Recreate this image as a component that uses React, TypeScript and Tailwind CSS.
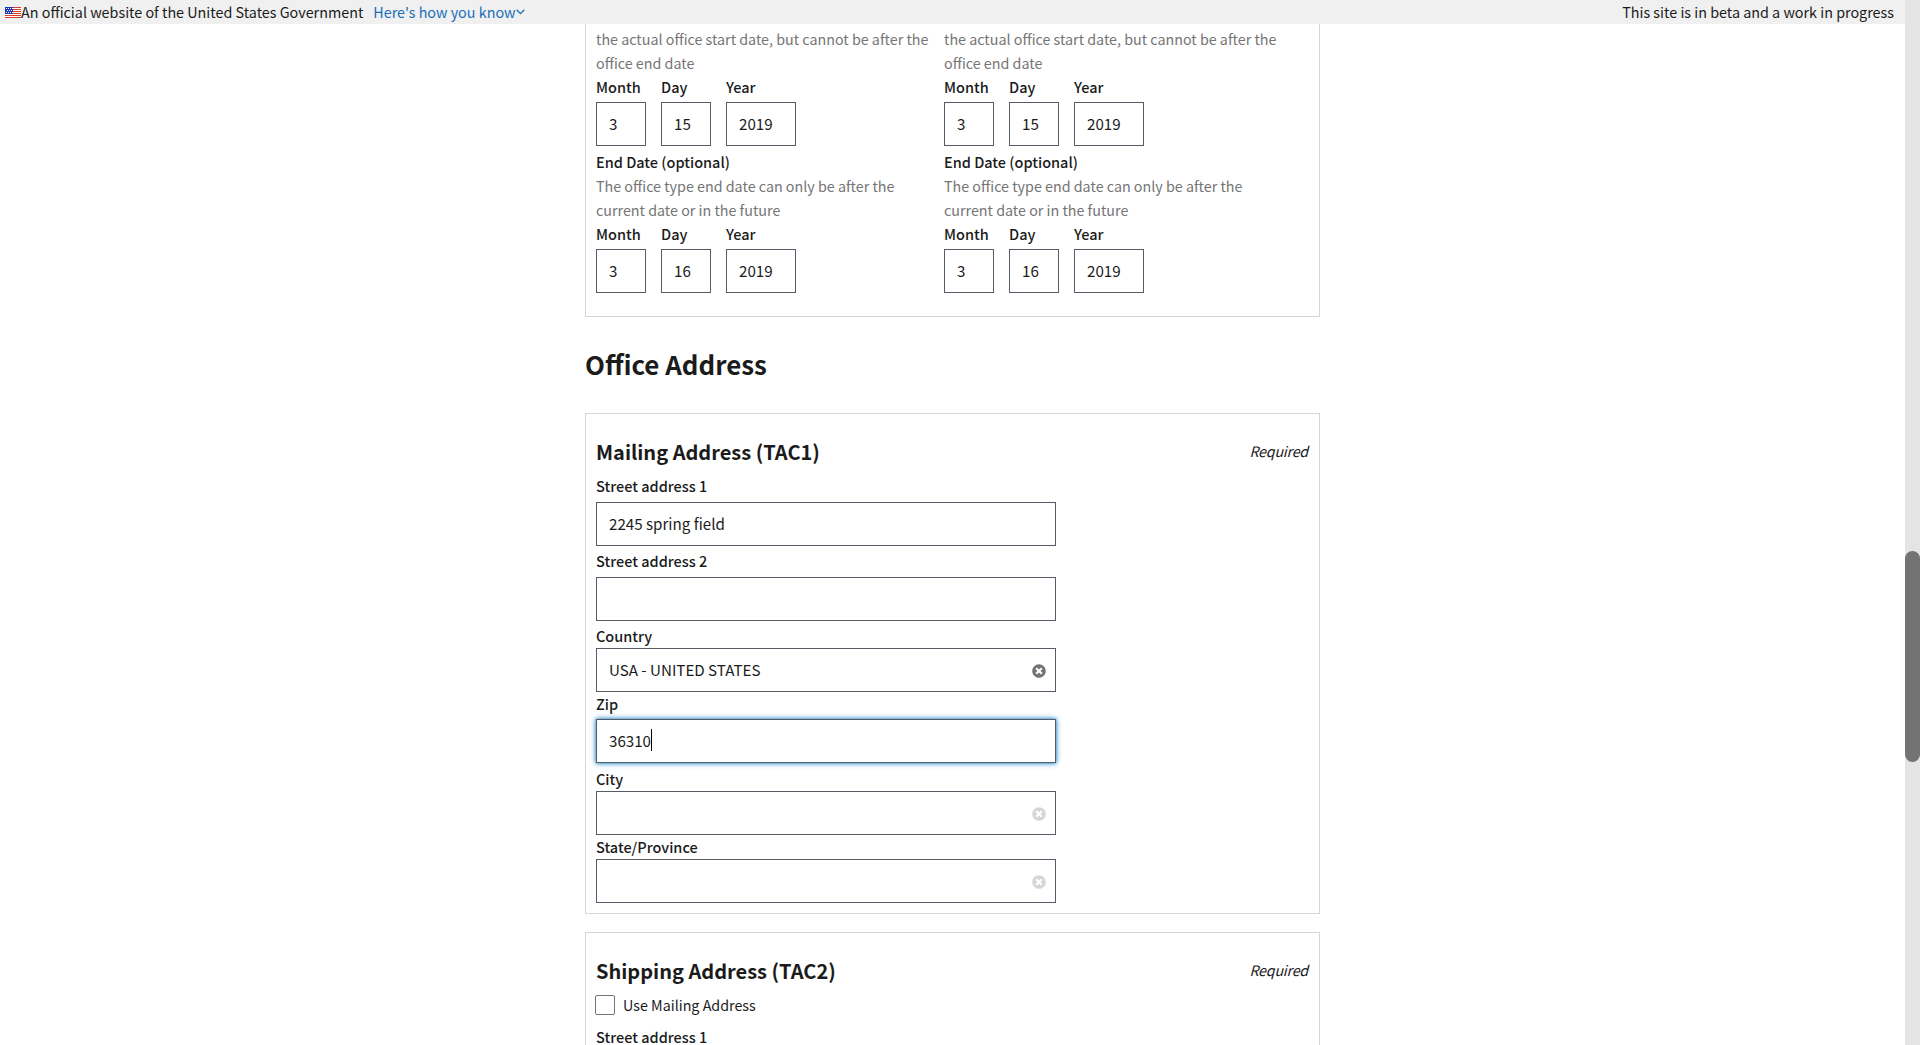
import React from 'react';
import { FaTimesCircle } from 'react-icons/fa';

function ClearIcon({ muted }: { muted?: boolean }) {
  return (
    <FaTimesCircle
      className={`absolute top-[15px] right-[9px] size-[14px] ${muted ? 'text-[#d6d6d6]' : 'text-[#757575]'}`}
    />
  );
}

function Label({ children, className }: { children: React.ReactNode; className: string }) {
  return <div className={`text-[14.5px] leading-[22px] font-medium ${className}`}>{children}</div>;
}

function Box({ value, size, children }: { value?: string; size: string; children?: React.ReactNode }) {
  return (
    <div
      className={`relative flex h-11 items-center border border-[#565c65] bg-white pb-[2px] pl-3 text-[15.15px] leading-6 ${size}`}
    >
      <span>{value}</span>
      {children}
    </div>
  );
}

function DateRow({ day }: { day: string }) {
  const parts = [
    { label: 'Month', value: '3', size: 'w-[50px]' },
    { label: 'Day', value: day, size: 'w-[50px]' },
    { label: 'Year', value: '2019', size: 'w-[70px]' },
  ];
  return (
    <div className="flex gap-[15px]">
      {parts.map((p) => (
        <div key={p.label}>
          <Label className="h-[26px]">{p.label}</Label>
          <Box value={p.value} size={p.size} />
        </div>
      ))}
    </div>
  );
}

function OfficeDates() {
  return (
    <div className="w-[348px]">
      <p className="-mt-px mb-px whitespace-nowrap text-[#757575]">
        the actual office start date, but cannot be after the
        <br />
        office end date
      </p>
      <DateRow day="15" />
      <Label className="mt-[5px] h-6">End Date (optional)</Label>
      <p className="-mt-px mb-px whitespace-nowrap text-[#757575]">
        The office type end date can only be after the
        <br />
        current date or in the future
      </p>
      <DateRow day="16" />
    </div>
  );
}

function CardHeading({ title }: { title: string }) {
  return (
    <div className="flex h-8 items-center justify-between">
      <h3 className="text-[20px] font-bold">{title}</h3>
      <span className="mr-px pb-[2px] tracking-[-0.24px] italic">Required</span>
    </div>
  );
}

export default function App() {
  return (
    <div className="flex h-[1045px] w-[1920px] overflow-hidden bg-white font-['Noto_Sans_CJK_SC','Noto_Sans',sans-serif] text-[14.3px] leading-6 text-[#1b1b1b]">
      <div className="flex w-[1905px] flex-col">
        <header className="flex h-6 shrink-0 items-center bg-[#f0f0f0] pr-[11px] pl-[5px] text-[14.35px]">
          <svg viewBox="0 0 16 11" className="h-[11px] w-4">
            <rect width="16" height="11" fill="#fff" />
            <path d="M0 .5h16M0 2.5h16M0 4.5h16M0 6.5h16M0 8.5h16M0 10.5h16" stroke="#db3e1f" />
            <rect width="8" height="7" fill="#1e33b1" />
            <path d="M1 1.5h7M2 3.5h6M1 5.5h7" stroke="#fff" strokeDasharray="1 1" />
          </svg>
          <span>An official website of the United States Government</span>
          <span className="ml-[10px] text-[#1a6fb9]">Here's how you know</span>
          <svg viewBox="0 0 9 6" className="h-[6px] w-[9px]" fill="none" stroke="#1a6fb9" strokeWidth="1.3">
            <path d="M.7.8 4.5 4.6 8.3.8" />
          </svg>
          <span className="ml-auto">This site is in beta and a work in progress</span>
        </header>

        <main className="ml-[585px] w-[735px]">
          <section className="flex h-[293px] border border-t-0 border-[#d6d6d6] pt-1 pl-[10px]">
            <OfficeDates />
            <OfficeDates />
          </section>

          <h2 className="mt-[27px] mb-[29px] h-10 text-[25.9px] leading-10 font-bold">Office Address</h2>

          <section className="h-[501px] border border-[#d6d6d6] px-[10px] pt-[22px]">
            <CardHeading title="Mailing Address (TAC1)" />
            <Label className="mt-[7px] h-[27px]">Street address 1</Label>
            <Box value="2245 spring field" size="w-[460px]" />
            <Label className="mt-1 h-[27px]">Street address 2</Label>
            <Box size="w-[460px]" />
            <Label className="mt-1 h-[23px]">Country</Label>
            <Box value="USA - UNITED STATES" size="w-[460px]">
              <ClearIcon />
            </Box>
            <Label className="mt-px h-[26px]">Zip</Label>
            <Box value="36310" size="w-[460px] shadow-[0_0_3px_#3e94cf,0_0_6px_#3e94cf]">
              <span className="h-[22px] w-px bg-black" />
            </Box>
            <Label className="mt-[5px] h-[23px]">City</Label>
            <Box size="w-[460px]">
              <ClearIcon muted />
            </Box>
            <Label className="mt-px h-[23px]">State/Province</Label>
            <Box size="w-[460px]">
              <ClearIcon muted />
            </Box>
          </section>

          <section className="mt-[18px] h-[501px] border border-[#d6d6d6] px-[10px] pt-[22px]">
            <CardHeading title="Shipping Address (TAC2)" />
            <div className="mt-2 flex h-5 items-center">
              <span className="-ml-px size-5 rounded-[2px] border border-[#71767a]" />
              <span className="ml-2 pb-px">Use Mailing Address</span>
            </div>
            <Label className="mt-[11px] h-[27px]">Street address 1</Label>
            <Box size="w-[460px]" />
          </section>
        </main>
      </div>
      <div className="w-[15px] bg-[#e4e4e4] pt-[551px]">
        <div className="h-[211px] rounded-full bg-[#737373]" />
      </div>
    </div>
  );
}
